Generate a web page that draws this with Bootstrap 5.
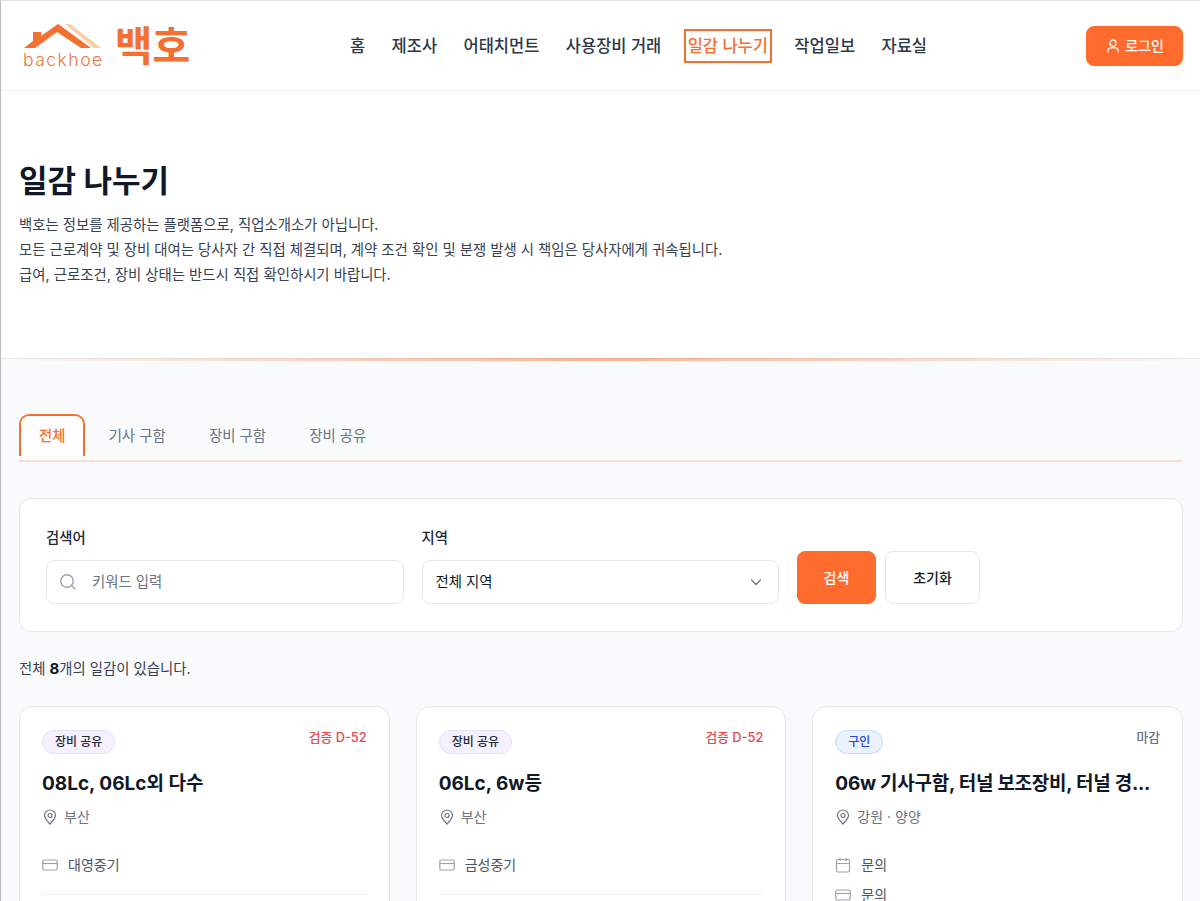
<!DOCTYPE html>
<html lang="ko">

<head>
  <meta charset="utf-8" />
  <meta name="viewport" content="width=device-width, initial-scale=1.0" />
  <title>일감 나누기</title>
  <link href="https://cdn.jsdelivr.net/npm/bootstrap@5.3.0/dist/css/bootstrap.min.css" rel="stylesheet">
  <style>
    :root {
      --accent: #ff6b2c;
      --ink: #111827;
      --line: #e5e7eb;
    }

    html, body {
      height: 901px;
      overflow: hidden;
    }

    body {
      font-family: Inter, "Noto Sans CJK KR", sans-serif;
      background: #f8fafc;
      color: var(--ink);
      border-left: 1px solid #b9b9b9;
      border-top: 1px solid #e2e2e2;
    }

    .site-nav {
      height: 90px;
      padding: 0 17px 0 22px;
      background: #fff;
      border-bottom: 1px solid #f1f2f4;
    }

    .logo { width: 168px; }
    .logo-mark { color: #f0743a; font-size: 17.5px; letter-spacing: 1.5px; line-height: 18px; font-weight: 300; margin-top: 2px; }
    .logo-name { color: #f4702f; font-size: 41px; font-weight: 700; line-height: 44px; margin: 0 0 0 11px; }

    .main-nav { gap: 18.4px; }
    .main-nav a {
      color: #2d3748;
      font-size: 16.5px;
      font-weight: 500;
      padding: 2px 2px;
      border: 2px solid transparent;
      text-decoration: none;
      line-height: 26px;
    }
    .main-nav a.active { color: #f4702f; border-color: #f4702f; }

    .btn-accent {
      background: var(--accent);
      border-color: var(--accent);
      color: #fff;
      font-weight: 500;
    }
    .btn-login { width: 97px; height: 40px; font-size: 14px; border-radius: 8px; padding: 0; }

    .hero {
      height: 268px;
      padding: 68px 18px 0;
      background: #fff;
      border-bottom: 1px solid #e8e9ec;
      position: relative;
    }
    .hero::after {
      content: "";
      position: absolute;
      left: 0;
      right: 0;
      bottom: -3px;
      height: 3px;
      background: linear-gradient(90deg, transparent, rgba(244, 112, 47, .5) 50%, transparent);
    }
    .hero h1 { font-size: 31px; font-weight: 700; line-height: 44px; margin: 0 0 9px; }
    .hero p { font-size: 14.4px; line-height: 25px; color: #374151; margin: 0; }

    .content { padding: 55px 17px 0 18px; }

    .tabs {
      border-bottom: 2px solid #fcdccd;
      padding-bottom: 4px;
      gap: 0;
    }
    .tabs a {
      color: #6b7280;
      font-size: 14.4px;
      font-weight: 400;
      height: 42px;
      line-height: 40px;
      padding: 0 19.65px;
      text-decoration: none;
      border: 2px solid transparent;
      border-bottom: 0;
      border-radius: 10px 10px 0 0;
    }
    .tabs a.active { color: #f4702f; font-weight: 500; border-color: #f4702f; background: #fff; padding: 0 18px; margin-right: 1.5px; }

    .search-card {
      margin-top: 36px;
      height: 134px;
      padding: 27px 26px;
      background: #fff;
      border: 1px solid var(--line);
      border-radius: 12px;
      gap: 18px;
    }
    .field { width: 357.5px; }
    .field label { font-size: 14.4px; font-weight: 500; color: #1f2937; line-height: 24px; margin-bottom: 10px; display: block; }
    .field-box {
      height: 44px;
      border: 1px solid var(--line);
      border-radius: 8px;
      font-size: 14.4px;
      padding: 0 12px;
      background: #fff;
    }
    .field-box.input { color: #6b7280; gap: 15px; padding-bottom: 1px; }
    .field-box.select { color: #111827; font-weight: 400; padding-right: 15px; padding-left: 13px; padding-bottom: 1px; }
    .btn-search { width: 79px; height: 53px; font-size: 14px; border-radius: 8px; padding: 0; }
    .btn-reset { width: 95px; height: 53px; font-size: 14px; font-weight: 500; border: 1px solid var(--line); background: #fff; color: #111827; border-radius: 8px; padding: 0; }
    .search-actions { gap: 9px; }

    .count { font-size: 14.4px; color: #374151; margin: 26px 0 26px; line-height: 22px; }
    .count b { color: #111827; font-weight: 700; font-size: 15px; }

    .job-grid { display: grid; grid-template-columns: repeat(3, 1fr); gap: 26px; }
    .job-card {
      background: #fff;
      border: 1px solid var(--line);
      border-radius: 14px;
      padding: 23px 22px 22px;
      min-width: 0;
      height: 300px;
    }
    .tag {
      font-size: 12px;
      font-weight: 500;
      line-height: 22px;
      padding: 0 12px;
      border-radius: 12px;
      display: inline-block;
      height: 24px;
    }
    .tag-share { background: #f5f0fd; border: 1px solid #e9def9; color: #1f2937; }
    .tag-hire { background: #e9f2fe; border: 1px solid #c4dcf8; color: #1d4ed8; }
    .due { font-size: 12.8px; font-weight: 500; line-height: 18px; margin-top: -1px; }
    .due-red { color: #e8484d; }
    .due-gray { color: #6b7280; }
    .job-title { font-size: 19px; font-weight: 700; line-height: 28px; margin: 16px 0 8px; white-space: nowrap; }
    .job-title.long { letter-spacing: -0.26px; }
    .job-place { font-size: 14px; color: #6b7280; line-height: 22px; gap: 6px; margin-bottom: 26px; }
    .job-row { font-size: 14px; color: #4b5563; line-height: 22px; gap: 10px; margin-bottom: 8px; }
    .job-divider { border-top: 1px solid #eef0f3; margin-top: 18px; }
  </style>
</head>

<body>
  <nav class="site-nav d-flex align-items-center justify-content-between">
    <a href="#" class="logo d-flex align-items-center text-decoration-none">
      <span class="d-flex flex-column align-items-center">
        <svg width="80" height="26" viewBox="24 24 80 26">
          <path d="M66 25H71L102 49H95Z" fill="#fbcfa6" />
          <path d="M25 49L34 42V33H42V37L59 25L92 49H82L58 33L36 49Z" fill="#f4702f" />
        </svg>
        <span class="logo-mark">backhoe</span>
      </span>
      <span class="logo-name">백호</span>
    </a>
    <div class="main-nav d-flex align-items-center">
      <a href="#">홈</a>
      <a href="#">제조사</a>
      <a href="#">어태치먼트</a>
      <a href="#">사용장비 거래</a>
      <a href="#" class="active">일감 나누기</a>
      <a href="#">작업일보</a>
      <a href="#">자료실</a>
    </div>
    <button class="btn btn-accent btn-login d-flex align-items-center justify-content-center gap-1">
      <svg width="16" height="16" viewBox="0 0 16 16" fill="none" stroke="#fff" stroke-width="1.3">
        <circle cx="8" cy="5" r="3" />
        <path d="M3 14v-1.5C3 10.5 5 9.5 8 9.5s5 1 5 3V14" stroke-linecap="round" />
      </svg>
      로그인
    </button>
  </nav>

  <section class="hero">
    <h1>일감 나누기</h1>
    <p>백호는 정보를 제공하는 플랫폼으로, 직업소개소가 아닙니다.<br>
      모든 근로계약 및 장비 대여는 당사자 간 직접 체결되며, 계약 조건 확인 및 분쟁 발생 시 책임은 당사자에게 귀속됩니다.<br>
      급여, 근로조건, 장비 상태는 반드시 직접 확인하시기 바랍니다.</p>
  </section>

  <main class="content">
    <div class="tabs d-flex">
      <a href="#" class="active">전체</a>
      <a href="#">기사 구함</a>
      <a href="#">장비 구함</a>
      <a href="#">장비 공유</a>
    </div>

    <div class="search-card d-flex align-items-end">
      <div class="field">
        <label>검색어</label>
        <div class="field-box input d-flex align-items-center">
          <svg width="18" height="18" viewBox="0 0 18 18" fill="none" stroke="#9ca3af" stroke-width="1.4">
            <circle cx="8" cy="8" r="6.2" />
            <path d="M12.6 12.6L16 16" stroke-linecap="round" />
          </svg>
          키워드 입력
        </div>
      </div>
      <div class="field">
        <label>지역</label>
        <div class="field-box select d-flex align-items-center justify-content-between">
          전체 지역
          <svg width="14" height="14" viewBox="0 0 14 14" fill="none" stroke="#6b7280" stroke-width="1.3">
            <path d="M2.5 5L7 9.5L11.5 5" stroke-linecap="round" stroke-linejoin="round" />
          </svg>
        </div>
      </div>
      <div class="search-actions d-flex">
        <button class="btn btn-accent btn-search">검색</button>
        <button class="btn btn-reset">초기화</button>
      </div>
    </div>

    <p class="count">전체 <b>8</b>개의 일감이 있습니다.</p>

    <div class="job-grid">
      <article class="job-card">
        <div class="d-flex justify-content-between align-items-start">
          <span class="tag tag-share">장비 공유</span>
          <span class="due due-red">검증 D-52</span>
        </div>
        <div class="job-title">08Lc, 06Lc외 다수</div>
        <div class="job-place d-flex align-items-center">
          <svg width="16" height="16" viewBox="0 0 16 16" fill="none" stroke="#6b7280" stroke-width="1.2">
            <path d="M8 15C5 11.8 2.5 9.4 2.5 6.5a5.5 5.5 0 0 1 11 0C13.5 9.4 11 11.8 8 15Z" />
            <circle cx="8" cy="6.5" r="2" />
          </svg>
          부산
        </div>
        <div class="job-row d-flex align-items-center">
          <svg width="16" height="16" viewBox="0 0 16 16" fill="none" stroke="#9ca3af" stroke-width="1.2">
            <rect x="0.8" y="3" width="14.4" height="10" rx="1.5" />
            <path d="M0.8 6.5H15.2" />
          </svg>
          대영중기
        </div>
        <div class="job-divider"></div>
      </article>

      <article class="job-card">
        <div class="d-flex justify-content-between align-items-start">
          <span class="tag tag-share">장비 공유</span>
          <span class="due due-red">검증 D-52</span>
        </div>
        <div class="job-title">06Lc, 6w등</div>
        <div class="job-place d-flex align-items-center">
          <svg width="16" height="16" viewBox="0 0 16 16" fill="none" stroke="#6b7280" stroke-width="1.2">
            <path d="M8 15C5 11.8 2.5 9.4 2.5 6.5a5.5 5.5 0 0 1 11 0C13.5 9.4 11 11.8 8 15Z" />
            <circle cx="8" cy="6.5" r="2" />
          </svg>
          부산
        </div>
        <div class="job-row d-flex align-items-center">
          <svg width="16" height="16" viewBox="0 0 16 16" fill="none" stroke="#9ca3af" stroke-width="1.2">
            <rect x="0.8" y="3" width="14.4" height="10" rx="1.5" />
            <path d="M0.8 6.5H15.2" />
          </svg>
          금성중기
        </div>
        <div class="job-divider"></div>
      </article>

      <article class="job-card">
        <div class="d-flex justify-content-between align-items-start">
          <span class="tag tag-hire">구인</span>
          <span class="due due-gray">마감</span>
        </div>
        <div class="job-title long">06w 기사구함, 터널 보조장비, 터널 경...</div>
        <div class="job-place d-flex align-items-center">
          <svg width="16" height="16" viewBox="0 0 16 16" fill="none" stroke="#6b7280" stroke-width="1.2">
            <path d="M8 15C5 11.8 2.5 9.4 2.5 6.5a5.5 5.5 0 0 1 11 0C13.5 9.4 11 11.8 8 15Z" />
            <circle cx="8" cy="6.5" r="2" />
          </svg>
          강원 · 양양
        </div>
        <div class="job-row d-flex align-items-center">
          <svg width="16" height="16" viewBox="0 0 16 16" fill="none" stroke="#9ca3af" stroke-width="1.2">
            <rect x="1.5" y="2.5" width="13" height="12.5" rx="1.5" />
            <path d="M1.5 6.5H14.5M5 0.8V4M11 0.8V4" />
          </svg>
          문의
        </div>
        <div class="job-row d-flex align-items-center">
          <svg width="16" height="16" viewBox="0 0 16 16" fill="none" stroke="#9ca3af" stroke-width="1.2">
            <rect x="0.8" y="3" width="14.4" height="10" rx="1.5" />
            <path d="M0.8 6.5H15.2" />
          </svg>
          문의
        </div>
      </article>
    </div>
  </main>

  <script src="https://cdn.jsdelivr.net/npm/bootstrap@5.3.0/dist/js/bootstrap.bundle.min.js"></script>
</body>

</html>
